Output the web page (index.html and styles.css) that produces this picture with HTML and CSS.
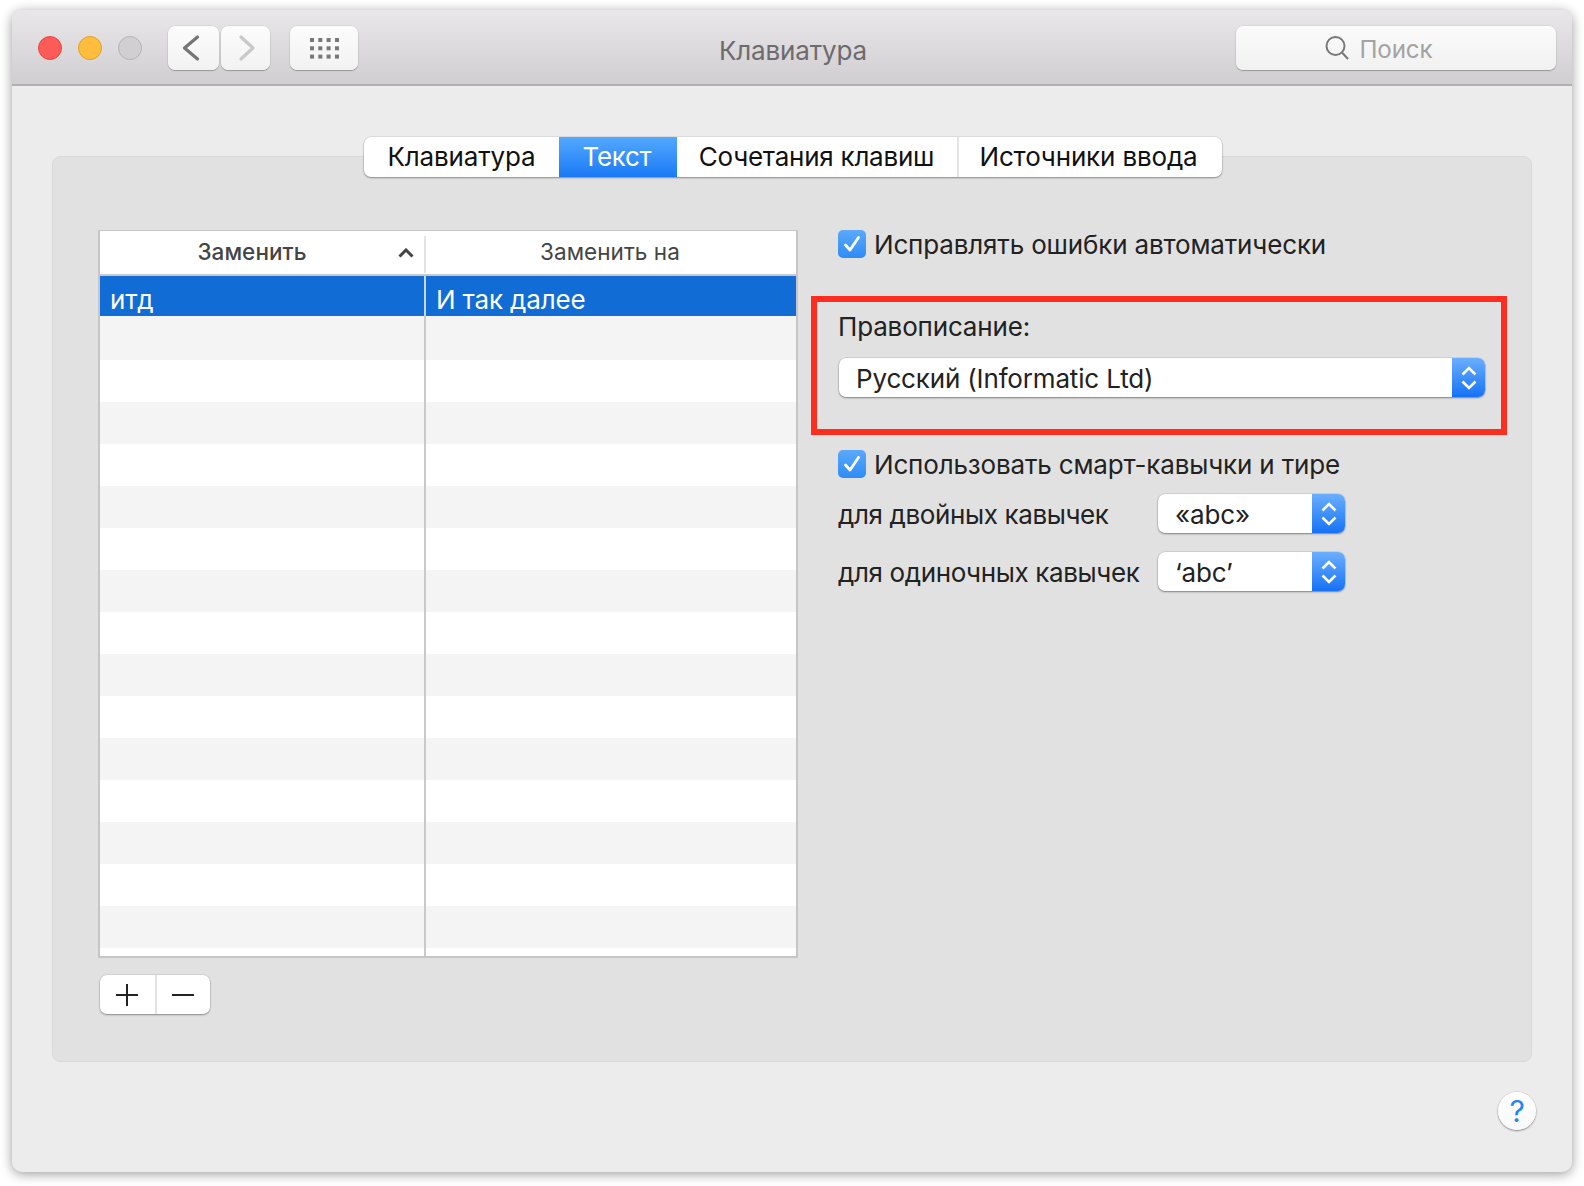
FILE: index.html
```html
<!DOCTYPE html>
<html lang="ru">
<head>
<meta charset="utf-8">
<title>Клавиатура</title>
<link rel="stylesheet" href="styles.css">
</head>
<body>
<div class="window">
  <header class="titlebar">
    <div class="tb-left">
      <div class="lights">
        <span class="light red"></span>
        <span class="light yellow"></span>
        <span class="light gray"></span>
      </div>
      <div class="nav">
        <button class="tbtn back"><svg width="20" height="28" viewBox="0 0 20 28"><path d="M16.500 3 L3.500 14 L16.500 25" class="chev-dark"/></svg></button>
        <button class="tbtn fwd"><svg width="20" height="28" viewBox="0 0 20 28"><path d="M4 3 L16 14 L4 25" class="chev-light"/></svg></button>
      </div>
      <button class="tbtn grid"><svg width="29" height="21" viewBox="0 0 29 21" class="dots"><rect x="0" y="0" width="4" height="4"/><rect x="8.300" y="0" width="4" height="4"/><rect x="16.600" y="0" width="4" height="4"/><rect x="25" y="0" width="4" height="4"/><rect x="0" y="8.300" width="4" height="4"/><rect x="8.300" y="8.300" width="4" height="4"/><rect x="16.600" y="8.300" width="4" height="4"/><rect x="25" y="8.300" width="4" height="4"/><rect x="0" y="16.600" width="4" height="4"/><rect x="8.300" y="16.600" width="4" height="4"/><rect x="16.600" y="16.600" width="4" height="4"/><rect x="25" y="16.600" width="4" height="4"/></svg></button>
    </div>
    <div class="title">Клавиатура</div>
    <div class="tb-right">
      <div class="search">
        <svg width="24" height="24" viewBox="0 0 24 24"><circle cx="10.500" cy="10" r="9" class="glass"/><path d="M17 16.500 L23 23" class="glass"/></svg>
        <span class="search-text">Поиск</span>
      </div>
    </div>
  </header>

  <main class="content">
    <nav class="tabs">
      <div class="tab t1">Клавиатура</div>
      <div class="tab t2 active">Текст</div>
      <div class="tab t3">Сочетания клавиш</div>
      <div class="tab t4">Источники ввода</div>
    </nav>
    <section class="panel">
      <div class="left-col">
        <div class="table">
          <div class="thead">
            <div class="th th1"><span>Заменить</span><svg class="sort" width="16" height="10" viewBox="0 0 16 10"><path d="M1.500 8.500 L8 2 L14.500 8.500"/></svg></div>
            <div class="th th2">Заменить на</div>
          </div>
          <div class="tbody">
            <div class="row sel"><div class="c1">итд</div><div class="c2">И так далее</div></div>
            <div class="row odd first-odd"><div class="c1"></div><div class="c2"></div></div>
            <div class="row"><div class="c1"></div><div class="c2"></div></div>
            <div class="row odd"><div class="c1"></div><div class="c2"></div></div>
            <div class="row"><div class="c1"></div><div class="c2"></div></div>
            <div class="row odd"><div class="c1"></div><div class="c2"></div></div>
            <div class="row"><div class="c1"></div><div class="c2"></div></div>
            <div class="row odd"><div class="c1"></div><div class="c2"></div></div>
            <div class="row"><div class="c1"></div><div class="c2"></div></div>
            <div class="row odd"><div class="c1"></div><div class="c2"></div></div>
            <div class="row"><div class="c1"></div><div class="c2"></div></div>
            <div class="row odd"><div class="c1"></div><div class="c2"></div></div>
            <div class="row"><div class="c1"></div><div class="c2"></div></div>
            <div class="row odd"><div class="c1"></div><div class="c2"></div></div>
            <div class="row"><div class="c1"></div><div class="c2"></div></div>
            <div class="row odd"><div class="c1"></div><div class="c2"></div></div>
            <div class="row tail"><div class="c1"></div><div class="c2"></div></div>
          </div>
        </div>
        <div class="pm">
          <div class="pm-btn plus"><svg width="22" height="22" viewBox="0 0 22 22"><path d="M11 0 V22 M0 11 H22"/></svg></div>
          <div class="pm-btn minus"><svg width="22" height="22" viewBox="0 0 22 22"><path d="M0 11 H22"/></svg></div>
        </div>
      </div>

      <div class="right-col">
        <label class="check-row first">
          <span class="check"><svg width="20" height="20" viewBox="0 0 20 20"><path d="M3.500 11 L8 16 L16.500 3.500"/></svg></span>
          <span class="check-text">Исправлять ошибки автоматически</span>
        </label>

        <div class="highlight">
          <div class="hl-label">Правописание:</div>
          <div class="select wide">
            <span class="sel-text">Русский (Informatic Ltd)</span>
            <span class="stepper"><svg width="16" height="24" viewBox="0 0 16 24"><path d="M1.500 8.500 L8 2 L14.500 8.500 M1.500 15.500 L8 22 L14.500 15.500"/></svg></span>
          </div>
        </div>

        <label class="check-row second">
          <span class="check"><svg width="20" height="20" viewBox="0 0 20 20"><path d="M3.500 11 L8 16 L16.500 3.500"/></svg></span>
          <span class="check-text">Использовать смарт-кавычки и тире</span>
        </label>

        <div class="quote-row q1">
          <span class="q-label">для двойных кавычек</span>
          <div class="select small">
            <span class="sel-text">«abc»</span>
            <span class="stepper"><svg width="16" height="24" viewBox="0 0 16 24"><path d="M1.500 8.500 L8 2 L14.500 8.500 M1.500 15.500 L8 22 L14.500 15.500"/></svg></span>
          </div>
        </div>
        <div class="quote-row q2">
          <span class="q-label">для одиночных кавычек</span>
          <div class="select small">
            <span class="sel-text">‘abc’</span>
            <span class="stepper"><svg width="16" height="24" viewBox="0 0 16 24"><path d="M1.500 8.500 L8 2 L14.500 8.500 M1.500 15.500 L8 22 L14.500 15.500"/></svg></span>
          </div>
        </div>
      </div>
    </section>
    <div class="help-row"><div class="help">?</div></div>
  </main>
</div>
</body>
</html>
```
FILE: styles.css
```css
* { box-sizing: border-box; }
html, body { margin: 0; padding: 0; background: #fff; }
body {
  width: 1584px;
  height: 1186px;
  overflow: hidden;
  padding: 10px 12px 14px;
  font-family: Inter, "Open Sans", "Liberation Sans", sans-serif;
  font-size: 26px;
  letter-spacing: -.16px;
  color: #222;
}
.window {
  width: 1560px;
  height: 1162px;
  background: #ececec;
  border-radius: 10px;
  box-shadow: 0 2px 12px rgba(0,0,0,.4);
  overflow: hidden;
  display: flex;
  flex-direction: column;
}
.titlebar {
  height: 76px;
  flex: none;
  padding: 16px 16px 0 26px;
  background: linear-gradient(#e9e7e9, #d0ced0);
  border-bottom: 2px solid #b1afb1;
  display: grid;
  grid-template-columns: 1fr auto 1fr;
  align-items: start;
}
.tb-left { display: flex; align-items: center; }
.tb-right { display: flex; justify-content: flex-end; }
.lights { display: flex; gap: 16px; margin-right: 26px; }
.light { width: 24px; height: 24px; border-radius: 50%; border: 1px solid; }
.red { background: #fc5b57; border-color: #e3483f; }
.yellow { background: #ffbd3e; border-color: #e2a029; }
.gray { background: #d1cfd1; border-color: #b5b3b5; }
.nav { display: flex; gap: 2px; margin-right: 20px; }
.tbtn {
  height: 44px;
  padding: 0;
  border: 0;
  border-radius: 7px;
  background: linear-gradient(#fcfcfc, #f2f2f2);
  box-shadow: 0 1px 1px rgba(0,0,0,.25), 0 0 0 .5px rgba(0,0,0,.1);
  display: flex;
  align-items: center;
  justify-content: center;
}
.back { width: 51px; padding-right: 6px; }
.fwd { width: 49px; padding-left: 2px; }
.grid { width: 68px; }
.chev-dark, .chev-light { fill: none; stroke-width: 3.300; stroke-linecap: round; stroke-linejoin: round; }
.chev-dark { stroke: #767676; }
.chev-light { stroke: #c9c9c9; }
.dots { fill: #777; }
.title { color: #6d6b6d; line-height: 48px; margin-right: 8px; padding-top: 1px; }
.search {
  width: 320px;
  height: 44px;
  border-radius: 7px;
  background: linear-gradient(#fbfbfb, #f1f1f1);
  box-shadow: 0 1px 1px rgba(0,0,0,.25), 0 0 0 .5px rgba(0,0,0,.1);
  display: flex;
  align-items: center;
  justify-content: center;
  gap: 11px;
  padding-right: 35px;
  color: #a3a3a3;
}
.search-text { font-size: 24.200px; padding-top: 2px; }
.glass { fill: none; stroke: #777; stroke-width: 2; }

.content {
  flex: 1;
  padding: 51px 40px 0;
  display: flex;
  flex-direction: column;
}
.tabs {
  display: flex;
  align-self: center;
  height: 40px;
  margin-bottom: -21px;
  margin-left: 2px;
  position: relative;
  z-index: 1;
  background: #fff;
  border-radius: 7px;
  box-shadow: 0 1px 2px rgba(0,0,0,.35), 0 0 0 .5px rgba(0,0,0,.12);
  overflow: hidden;
}
.tab {
  display: flex;
  align-items: center;
  justify-content: center;
  color: #111;
  border-left: 2px solid #e4e4e4;
  padding-bottom: 2px;
}
.t1 { width: 195px; border-left: 0; }
.t2 { width: 118px; padding-right: 2px; letter-spacing: -.3px; }
.t3 { width: 280px; padding-right: 1px; letter-spacing: -.25px; }
.t4 { width: 265px; padding-right: 4px; letter-spacing: -.16px; }
.tab.active {
  background: linear-gradient(#53a8ff, #1a7af5);
  color: #fff;
  border-left: 0;
}
.tab.active + .tab { border-left: 0; }
.panel {
  height: 906px;
  flex: none;
  background: #e1e1e1;
  border: 1px solid #d9d9d9;
  border-radius: 8px;
  padding: 73px 0 0 45px;
  display: flex;
}
.left-col { width: 700px; flex: none; }
.table {
  height: 728px;
  width: 700px;
  background: #fff;
  border: 2px solid #c6c6c6;
  border-top-width: 1px;
  display: flex;
  flex-direction: column;
  overflow: hidden;
}
.thead {
  height: 45px;
  flex: none;
  display: flex;
  border-bottom: 2px solid #c9c9c9;
  font-size: 22.500px;
  color: #444;
}
.th { display: flex; align-items: center; justify-content: center; height: 37px; margin-top: 5px; padding-bottom: 6px; }
.th1 {
  width: 326px;
  font-weight: 500;
  letter-spacing: .05px;
  border-right: 2px solid #e3e3e3;
  padding-right: 20px;
  position: relative;
}
.sort { position: absolute; right: 10px; top: 12px; fill: none; stroke: #444; stroke-width: 3; }
.th2 { flex: 1; padding-right: 2px; letter-spacing: .05px; }
.tbody { flex: 1; display: flex; flex-direction: column; }
.row { height: 42px; flex: none; display: flex; }
.row.first-odd { height: 44px; }
.row.odd { background: #f4f4f4; }
.row.tail { flex: 1; }
.row.sel { height: 40px; background: #126cd6; color: #fff; }
.c1 { width: 326px; padding-left: 10px; border-right: 2px solid #c9c9c9; line-height: 48px; }
.c2 { flex: 1; padding-left: 10px; line-height: 48px; }
.row.sel .c1 { border-right-color: #c4d8f2; }
.pm {
  width: 110px;
  height: 39px;
  margin: 17px 0 0 2px;
  background: #fff;
  border-radius: 7px;
  box-shadow: 0 1px 2px rgba(0,0,0,.35), 0 0 0 .5px rgba(0,0,0,.1);
  display: flex;
}
.pm-btn { display: flex; align-items: center; justify-content: center; flex: 1; padding-right: 1px; }
.plus { border-right: 2px solid #e3e3e3; flex: none; width: 57px; }
.pm-btn path { stroke: #222; stroke-width: 2; fill: none; }

.right-col { margin-left: 40px; width: 660px; display: flex; flex-direction: column; }
.check-row { display: flex; align-items: center; gap: 8px; height: 28px; }
.check-text { padding-top: 1px; }
.check {
  width: 28px;
  height: 28px;
  border-radius: 5px;
  background: linear-gradient(#5aa9fb, #2f8cf5);
  display: flex;
  align-items: center;
  justify-content: center;
  flex: none;
}
.check path { fill: none; stroke: #fff; stroke-width: 2.800; stroke-linecap: round; stroke-linejoin: round; }
.highlight {
  margin: 38px 0 0 -27px;
  width: 696px;
  height: 139px;
  border: 6px solid #ff2d20;
  padding: 7px 15px 0 21px;
}
.hl-label { line-height: 32px; margin-bottom: 15px; margin-top: 2px; }
.select {
  height: 39px;
  display: flex;
  background: #fff;
  border-radius: 7px;
  box-shadow: 0 1px 2px rgba(0,0,0,.4), 0 0 0 .5px rgba(0,0,0,.12);
  overflow: hidden;
  align-items: stretch;
}
.select.wide { width: 646px; margin-left: 1px; }
.select.small { width: 187px; flex: none; margin-left: 1px; }
.sel-text { flex: 1; padding-left: 17px; line-height: 41px; }
.stepper {
  width: 33px;
  flex: none;
  background: linear-gradient(#6aafff, #1672f5);
  display: flex;
  align-items: center;
  justify-content: center;
}
.stepper path { fill: none; stroke: #fff; stroke-width: 2.600; }
.check-row.second { margin-top: 15px; }
.quote-row { display: flex; align-items: center; height: 39px; }
.q1 { margin-top: 16px; }
.q2 { margin-top: 19px; }
.q-label { width: 319px; flex: none; letter-spacing: -.38px; padding-top: 2px; }
.help-row { display: flex; justify-content: flex-end; padding: 30px 0 0; margin-right: -4px; }
.help {
  width: 38px;
  height: 38px;
  border-radius: 50%;
  background: linear-gradient(#fff, #f8f8f8);
  box-shadow: 0 1px 2px rgba(0,0,0,.4), 0 0 0 .5px rgba(0,0,0,.1);
  color: #1e85fb;
  font-size: 30px;
  font-weight: 400;
  text-align: center;
  line-height: 38px;
}
```
